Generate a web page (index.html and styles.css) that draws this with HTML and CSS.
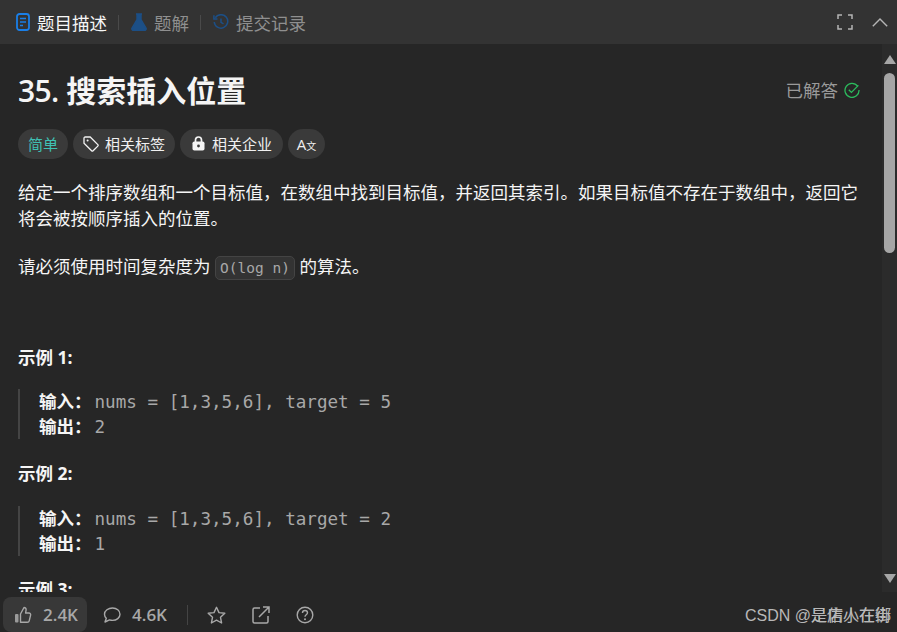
FILE: index.html
```html
<!DOCTYPE html>
<html lang="zh-CN">
<head>
    <meta charset="UTF-8">
    <meta name="viewport" content="width=device-width, initial-scale=1.0">
    <title>35. 搜索插入位置</title>
    <link rel="stylesheet" href="styles.css">
</head>
<body>
    <div class="panel">
        <header class="tabs">
            <div class="tab tab-active">
                <svg class="tab-icon" width="14" height="18" viewBox="0 0 14 18"><rect x="1" y="1" width="12" height="16" rx="2.5" fill="none" stroke="#1a7fe8" stroke-width="1.8"/><path d="M4 5.5h6M4 9h6M4 12.5h3" stroke="#1a7fe8" stroke-width="1.6" fill="none"/></svg>
                <span>题目描述</span>
            </div>
            <span class="tab-sep"></span>
            <div class="tab">
                <svg class="tab-icon" width="16" height="18" viewBox="0 0 16 18"><path d="M5 1h6M6 1v5.5L1 15c-.6 1.200.2 2.500 1.500 2.500h11c1.300 0 2.100-1.300 1.500-2.500L10 6.500V1" fill="#1c4f86" stroke="#1c4f86" stroke-width="1.400" stroke-linejoin="round"/></svg>
                <span>题解</span>
            </div>
            <span class="tab-sep"></span>
            <div class="tab">
                <svg class="tab-icon" width="16" height="16" viewBox="0 0 18 18"><path d="M2.600 4.200A7.600 7.600 0 1 1 1.400 9" fill="none" stroke="#1c4f86" stroke-width="1.700"/><path d="M1 1.500v4h4" fill="none" stroke="#1c4f86" stroke-width="1.700"/><path d="M9 5v4.400l2.800 1.800" fill="none" stroke="#1c4f86" stroke-width="1.700"/></svg>
                <span>提交记录</span>
            </div>
            <div class="tabs-right">
                <svg width="16" height="16" viewBox="0 0 16 16"><path d="M1 5V1h4M11 1h4v4M15 11v4h-4M5 15H1v-4" fill="none" stroke="#b5b5b5" stroke-width="1.500"/></svg>
                <svg width="16" height="9" viewBox="0 0 16 9"><path d="M.8 8.200 8 1l7.200 7.200" fill="none" stroke="#b5b5b5" stroke-width="1.400"/></svg>
            </div>
        </header>

        <div class="middle">
            <main class="content">
                <div class="title-row">
                    <h1><span class="num">35.</span> 搜索插入位置</h1>
                    <div class="solved">
                        <span>已解答</span>
                        <svg width="16" height="16" viewBox="0 0 16 16"><path d="M13.600 4.200A7 7 0 1 0 15 8" fill="none" stroke="#2cbb5d" stroke-width="1.300"/><path d="M4.800 7.800 7.400 10.400 14.400 3.400" fill="none" stroke="#2cbb5d" stroke-width="1.300"/></svg>
                    </div>
                </div>

                <div class="tags">
                    <span class="tag tag-easy">简单</span>
                    <span class="tag">
                        <svg width="16" height="16" viewBox="0 0 16 16"><path d="M1 2.200C1 1.500 1.500 1 2.200 1h5l7.600 7.600c.4.400.4 1.100 0 1.500l-4.700 4.700c-.4.400-1.100.4-1.500 0L1 7.200z" fill="none" stroke="#f2f2f2" stroke-width="1.300"/><circle cx="4.600" cy="4.600" r="1" fill="#f2f2f2"/></svg>
                        <span>相关标签</span>
                    </span>
                    <span class="tag tag-company">
                        <svg width="13" height="15" viewBox="0 0 13 15"><path d="M3.500 6V4a3 3 0 0 1 6 0v2" fill="none" stroke="#f5f5f5" stroke-width="1.700"/><rect x="0.500" y="5.500" width="12" height="9" rx="1.800" fill="#f5f5f5"/><circle cx="6.500" cy="10" r="1.400" fill="#3a3a3a"/></svg>
                        <span>相关企业</span>
                    </span>
                    <span class="tag tag-lang">A<small>文</small></span>
                </div>

                <p class="para">给定一个排序数组和一个目标值，在数组中找到目标值，并返回其索引。如果目标值不存在于数组中，返回它将会被按顺序插入的位置。</p>
                <p class="para para-algo">请必须使用时间复杂度为 <code class="inline-code">O(log n)</code> 的算法。</p>

                <h3 class="example-title first">示例 1:</h3>
                <div class="example">
                    <div class="example-line"><b>输入：</b><span class="mono">nums = [1,3,5,6], target = 5</span></div>
                    <div class="example-line"><b>输出：</b><span class="mono">2</span></div>
                </div>

                <h3 class="example-title">示例 2:</h3>
                <div class="example example-second">
                    <div class="example-line"><b>输入：</b><span class="mono">nums = [1,3,5,6], target = 2</span></div>
                    <div class="example-line"><b>输出：</b><span class="mono">1</span></div>
                </div>

                <h3 class="example-title">示例 3:</h3>
            </main>
            <div class="scrollbar">
                <span class="arrow-up"></span>
                <span class="thumb"></span>
                <span class="arrow-down"></span>
            </div>
        </div>

        <footer class="actions">
            <div class="action action-like">
                <svg width="18" height="18" viewBox="0 0 18 18"><rect x="1" y="8" width="3.500" height="8.500" rx="1" fill="#9a9a9a"/><path d="M6.500 8 10 1.500c1.500 0 2.300 1 2.100 2.500l-.5 3h3.300c1.200 0 2 1 1.700 2.200l-1.400 5.600c-.2.900-1 1.500-1.900 1.500H6.500z" fill="none" stroke="#a8a8a8" stroke-width="1.400" stroke-linejoin="round"/></svg>
                <span>2.4K</span>
            </div>
            <div class="action action-comment">
                <svg width="18" height="18" viewBox="0 0 18 18"><path d="M9.500 2c4.200 0 7.500 2.700 7.500 6.200s-3.300 6.200-7.500 6.200c-1.100 0-2.100-.2-3-.5L2 16l1.300-3.800C2 11 1.500 9.700 1.500 8.200 1.500 4.700 5.300 2 9.500 2z" fill="none" stroke="#a8a8a8" stroke-width="1.400" stroke-linejoin="round"/></svg>
                <span>4.6K</span>
            </div>
            <span class="action-sep"></span>
            <svg class="action-icon" width="19" height="18" viewBox="0 0 19 18"><path d="M9.500 1.300l2.500 5.300 5.800.7-4.300 4 1.100 5.700-5.100-2.800-5.100 2.800 1.100-5.700-4.300-4 5.800-.7z" fill="none" stroke="#a8a8a8" stroke-width="1.400" stroke-linejoin="round"/></svg>
            <svg class="action-icon" width="18" height="18" viewBox="0 0 18 18"><path d="M8 2H2.500C1.700 2 1 2.700 1 3.500v12c0 .8.700 1.500 1.500 1.500h12c.8 0 1.500-.7 1.500-1.500V10" fill="none" stroke="#a8a8a8" stroke-width="1.500"/><path d="M7 11 17 1M11 1h6v6" fill="none" stroke="#a8a8a8" stroke-width="1.500"/></svg>
            <svg class="action-icon" width="18" height="18" viewBox="0 0 18 18"><circle cx="9" cy="9" r="7.800" fill="none" stroke="#a8a8a8" stroke-width="1.400"/><path d="M6.500 7c0-1.500 1.100-2.500 2.500-2.500s2.500 1 2.500 2.300c0 2-2.500 2-2.500 3.900" fill="none" stroke="#a8a8a8" stroke-width="1.400"/><circle cx="9" cy="13.200" r="1" fill="#a8a8a8"/></svg>
        </footer>

        <div class="watermark">CSDN @<span class="wm-name">是佑小在街</span><span class="wm-name wm-over">是店人在绑</span></div>
    </div>
</body>
</html>
```

FILE: styles.css
```css
html, body {
    margin: 0;
    padding: 0;
    height: 100%;
}

body {
    background-color: #262626;
    color: #f5f5f5;
    font-family: "Open Sans", "Noto Sans CJK SC", sans-serif;
    font-size: 17.5px;
    overflow: hidden;
}

.panel {
    position: relative;
    display: flex;
    flex-direction: column;
    height: 100vh;
}

/* top tabs */
.tabs {
    display: flex;
    align-items: center;
    flex: 0 0 44px;
    padding: 0 9px 0 16px;
    box-sizing: border-box;
    background-color: #333333;
    color: #8f8f8f;
}

.tab {
    display: flex;
    align-items: center;
    gap: 7px;
}

.tab-active {
    color: #f7f7f7;
}

.tab-sep {
    width: 1px;
    height: 15px;
    margin: 0 12.5px 0 10.5px;
    background-color: #4a4a4a;
}

.tabs-right {
    display: flex;
    align-items: center;
    gap: 19px;
    margin-left: auto;
}

/* middle area */
.middle {
    display: flex;
    flex: 1;
    min-height: 0;
}

.content {
    flex: 1;
    min-width: 0;
    padding: 0 24px 0 18px;
    overflow: hidden;
}

.title-row {
    display: flex;
    align-items: center;
    justify-content: space-between;
    margin-top: 25px;
    height: 44px;
}

h1 {
    margin: 0;
    font-size: 30px;
    font-weight: 700;
    line-height: 44px;
}

.num {
    font-weight: 600;
    letter-spacing: -0.7px;
}

.solved {
    display: flex;
    align-items: center;
    gap: 6px;
    margin: 0 -2px 3px 0;
    color: #9a9a9a;
    font-size: 17.5px;
}

.tags {
    display: flex;
    align-items: center;
    gap: 5px;
    margin-top: 16px;
}

.tag {
    display: flex;
    align-items: center;
    gap: 6px;
    height: 30px;
    padding: 0 10px 1px;
    box-sizing: border-box;
    border-radius: 15px;
    background-color: #3a3a3a;
    color: #f0f0f0;
    font-size: 15px;
}

.tag-easy {
    color: #3fc1b4;
}

.tag-company {
    gap: 7px;
    padding: 0 11px 1px 12px;
}

.tag-lang {
    justify-content: center;
    gap: 0;
    width: 37px;
    padding: 0 0 1px;
    font-size: 15px;
}

.tag-lang small {
    font-size: 10px;
    margin-top: 3px;
}

.para {
    margin: 20px 0 0;
    line-height: 26px;
}

.para-algo {
    margin-top: 22px;
}

.inline-code {
    display: inline-block;
    padding: 0 4px;
    border: 1px solid #444444;
    border-radius: 5px;
    background-color: #333333;
    color: #a8a8a8;
    font-family: "DejaVu Sans Mono", monospace;
    font-size: 14.5px;
    line-height: 22px;
}

.example-title {
    margin: 21px 0 0;
    font-size: 17.5px;
    font-weight: 700;
    line-height: 26px;
}

.example-title.first {
    margin-top: 64px;
}

.example {
    margin-top: 19px;
    padding-left: 19px;
    border-left: 2px solid #444444;
}

.example-second {
    margin-top: 20px;
    margin-bottom: -1px;
}

.example-line {
    height: 25px;
    line-height: 25px;
}

.example b {
    font-weight: 700;
}

.mono {
    margin-left: 3px;
    color: #a8a8a8;
    font-family: "DejaVu Sans Mono", monospace;
    font-size: 17.6px;
}

/* scrollbar */
.scrollbar {
    display: flex;
    flex-direction: column;
    align-items: center;
    flex: 0 0 15px;
    padding: 11px 0 9px;
    box-sizing: border-box;
    background-color: #2b2b2b;
}

.arrow-up {
    width: 0;
    height: 0;
    border-left: 6px solid transparent;
    border-right: 6px solid transparent;
    border-bottom: 9px solid #a6a6a6;
}

.thumb {
    width: 11px;
    height: 180px;
    margin-top: 9px;
    border-radius: 6px;
    background-color: #a6a6a6;
}

.arrow-down {
    width: 0;
    height: 0;
    margin-top: auto;
    border-left: 6px solid transparent;
    border-right: 6px solid transparent;
    border-top: 9px solid #a6a6a6;
}

/* bottom bar */
.actions {
    display: flex;
    align-items: center;
    flex: 0 0 40px;
    padding: 5px 0 0 3px;
    box-sizing: border-box;
    background-color: #262626;
    color: #a8a8a8;
    font-size: 17px;
    font-weight: 600;
}

.action {
    display: flex;
    align-items: center;
    gap: 11px;
    height: 35px;
    padding: 0 0 0 11px;
    box-sizing: border-box;
}

.action-like {
    width: 84px;
    border-radius: 8px;
    background-color: #383838;
}

.action-comment {
    gap: 11px;
    padding: 0 16px;
}

.action-sep {
    width: 1px;
    height: 20px;
    margin: 0 19px 0 4px;
    background-color: #444444;
}

.action-icon {
    margin-right: 26px;
}

.watermark {
    position: absolute;
    right: 6px;
    bottom: 6px;
    color: #b8b8b8;
    font-family: "Liberation Sans", "Noto Sans CJK SC", sans-serif;
    font-size: 16px;
}

.wm-over {
    position: absolute;
    right: 0;
    top: 0;
}
```
